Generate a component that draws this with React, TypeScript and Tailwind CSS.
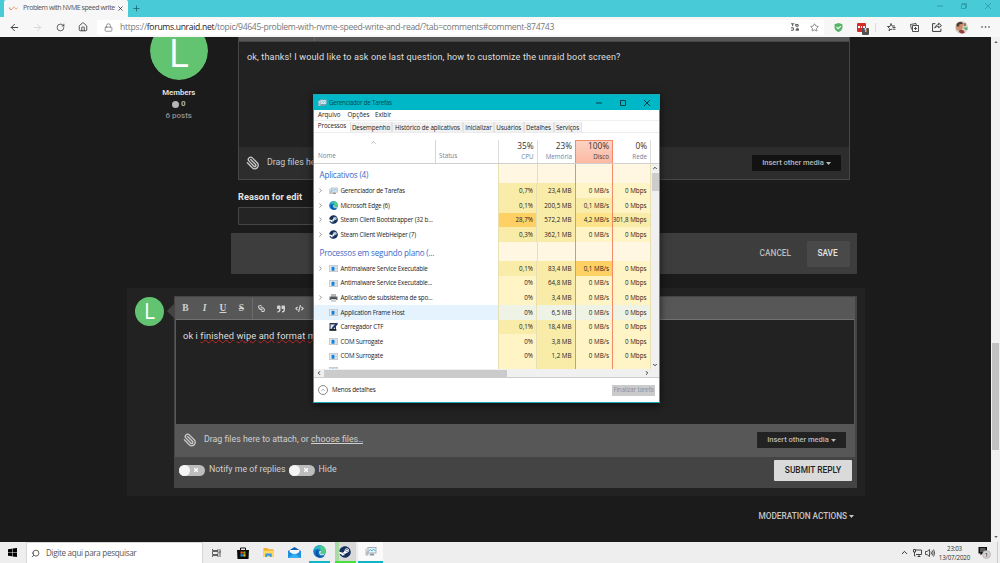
import type { ReactNode } from "react";
import {
  ArrowLeft,
  ArrowRight,
  Home,
  Lock,
  Paperclip,
  Plus,
  RotateCw,
  Search,
  Star,
  X,
  ChevronUp,
  ChevronDown,
  ChevronLeft,
  ChevronRight,
} from "lucide-react";
import { FaLink, FaQuoteRight, FaCode, FaSteam } from "react-icons/fa";

/* ---------- shared glyphs ---------- */

function Caret({ className = "" }: { className?: string }) {
  return (
    <svg viewBox="0 0 10 6" className={className || "h-[3px] w-[5px]"}>
      <path d="M0 0h10L5 6z" fill="currentColor" />
    </svg>
  );
}

function EdgeLogo({ className }: { className: string }) {
  return (
    <svg viewBox="0 0 24 24" className={className}>
      <circle cx="12" cy="12" r="11.5" fill="#1478c8" />
      <path d="M1 10C2 4 6.500.5 12 .5c7 0 11.500 5 11.500 10.500 0 4-3 6-6 6-2.500 0-4-.8-4-2 0-1 1.200-1.300 1.200-3.200C14.700 9.500 12.500 7.500 9 7.500c-4 0-7 1.500-8 2.500z" fill="#2fb6c0" />
      <path d="M14 .7c5.500.8 9.500 5 9.500 10.300 0 4-3 6-6 6-2.500 0-4-.8-4-2 0-1 1.200-1.300 1.200-3.200 0-3-2-6-.7-11.100z" fill="#5bd46e" opacity=".75" />
      <path d="M8.500 13c-.5 5 3.500 8.500 8 8.500 2.500 0 4.500-1 5.500-2-2 3-5.500 4.300-9 4C8 23 5 19.500 5 15.500 5 12 6.500 9.500 9 8.500c-.3 1.500-.4 2.500-.5 4.500z" fill="#0d4f9e" />
      <path d="M13.500 15c0 1.200 1.500 2 4 2 1.800 0 3.300-.6 4.500-1.700-.7 2.200-2.700 3.500-5.500 3.500-4 0-6-3-4.500-7.300.6-1.500 2.700-.5 2.700.5 0 1.700-1.200 2-1.200 3z" fill="#f3f3f3" />
    </svg>
  );
}

function SteamLogo({ className }: { className: string }) {
  return (
    <span className={`flex rounded-full bg-white ${className}`}>
      <FaSteam className="size-full text-[#15305c]" />
    </span>
  );
}

function MonitorIcon({ className }: { className: string }) {
  return (
    <svg viewBox="0 0 24 20" className={className}>
      <path d="M1 4h6v14H1z" fill="#b9bec2" />
      <path d="M5 1h18v13H5z" fill="#a9b0b5" />
      <path d="M7 3h14v9H7z" fill="#e2f3fa" />
      <path d="m7 10 4-4 3 3 3-4 4 4" stroke="#49a5cf" strokeWidth="1.800" fill="none" />
      <path d="M11 14h6l2 4H9z" fill="#8f979c" />
      <path d="M2 6h4M2 9h3" stroke="#fff" strokeWidth="1.200" />
    </svg>
  );
}

function AppIcon() {
  return (
    <svg viewBox="0 0 18 14" className="h-[7px] w-[9px]">
      <path d="M.5.5h17v13H.500z" fill="#e9edf0" stroke="#8c959b" />
      <path d="M5 3.500h6v8H5z" fill="#1680d8" />
      <path d="M12.500 4h3M12.500 7h3M12.500 10h3" stroke="#9fb0bb" />
    </svg>
  );
}

function PrinterIcon() {
  return (
    <svg viewBox="0 0 18 16" className="h-[8px] w-[9px]">
      <path d="M4 0h10v6H4z" fill="#b5b9bd" />
      <path d="M1 5h16v7H1z" fill="#6c7176" />
      <path d="M3 7h12v3H3z" fill="#474b50" />
      <path d="M4 10h10v6H4z" fill="#cfd3d6" />
    </svg>
  );
}

function CtfIcon() {
  return (
    <svg viewBox="0 0 18 18" className="h-[9px] w-[9px]">
      <path d="M1 2h13v15H1z" fill="#303a45" />
      <path d="M3 5h9v9H3z" fill="#dfe7ee" />
      <path d="M16 1 7 10l-3 6 6-3L18 4z" fill="#1f3472" />
      <path d="M1 16h14" stroke="#111" strokeWidth="2.500" />
    </svg>
  );
}

/* ---------- browser chrome ---------- */

function TabStrip() {
  return (
    <div className="flex h-[17px] shrink-0 items-stretch bg-[#48cbd6]">
      <div className="ml-[4px] flex w-[124px] items-center rounded-t-[2px] bg-[#f7f7f7] pl-[5px]">
        <svg viewBox="0 0 18 8" className="h-[5px] w-[9px]" fill="none" strokeWidth="1.600">
          <path d="M1 2v1c0 4 5 4 6 1" stroke="#d9604f" />
          <path d="M7 4c1-4 4-4 5-1s5 2 5-1" stroke="#ee9a55" />
        </svg>
        <span className="ml-[5px] w-[91px] whitespace-nowrap text-[7px] tracking-[-0.065em] text-[#555]">
          Problem with NVME speed write
        </span>
        <X className="ml-[2.500px] size-[7px] text-[#222]" strokeWidth={2.500} />
      </div>
      <Plus className="mt-[4px] ml-[4px] size-[9px] text-[#195f66]" strokeWidth={2} />
      <div className="ml-auto flex items-start gap-[18px] pt-[3px] pr-[9px] text-[#2a919b]">
        <svg viewBox="0 0 6 6" className="size-[6px]"><path d="M0 3h6" stroke="currentColor" strokeWidth=".8" /></svg>
        <svg viewBox="0 0 6 6" className="size-[6px]" fill="none" stroke="currentColor" strokeWidth=".7"><path d="M.5 1.500h4v4h-4zM1.500 1.500v-1h4v4h-1" /></svg>
        <svg viewBox="0 0 6 6" className="size-[6px]"><path d="m0 0 6 6M6 0 0 6" stroke="currentColor" strokeWidth=".7" /></svg>
      </div>
    </div>
  );
}

function Toolbar() {
  return (
    <div className="flex h-[20px] shrink-0 items-center bg-[#f7f7f7] pl-[9px] text-[#333]">
      <ArrowLeft className="size-[11px]" strokeWidth={2} />
      <ArrowRight className="ml-[12px] size-[11px] text-[#d5d5d5]" strokeWidth={2} />
      <RotateCw className="ml-[13px] size-[9px]" strokeWidth={2} />
      <Home className="ml-[13px] size-[10px]" strokeWidth={2} />
      <div className="ml-[9px] flex h-[15px] w-[727px] items-center rounded-[2px] bg-white pl-[7px]">
        <Lock className="size-[9px] text-[#666]" strokeWidth={1.800} />
        <span className="ml-[7px] text-[8.600px] tracking-[-0.037em] whitespace-nowrap text-[#777]">
          https://<span className="text-[#222]">forums.unraid.net</span>/topic/94645-problem-with-nvme-speed-write-and-read/?tab=comments#comment-874743
        </span>
        <svg viewBox="0 0 10 10" className="ml-auto size-[8px]" fill="none" stroke="#555" strokeWidth="1.200">
          <path d="M0 1h4M2 1v3M6 1v3h3V2H6M0 6h3v3H0M6 9l2-3 2 3zM7 8h2" />
        </svg>
        <Star className="mr-[5px] ml-[11px] size-[9px] text-[#666]" strokeWidth={2} />
      </div>
      <svg viewBox="0 0 16 16" className="ml-[10px] size-[9px]">
        <path d="M8 0 15 2v6c0 4-4 7-7 8-3-1-7-4-7-8V2z" fill="#56b567" />
        <path d="m4.500 7 3 3 4.500-4.500" stroke="#fff" strokeWidth="2" fill="none" />
      </svg>
      <div className="relative ml-[14px] flex h-[9px] w-[9px] items-center justify-center gap-px rounded-[1px] bg-[#d52b2b]">
        <i className="size-[1.500px] bg-white" /><i className="size-[1.500px] bg-white" /><i className="size-[1.500px] bg-white" />
        <b className="absolute top-[5px] left-[5px] flex h-[7px] w-[7px] items-center justify-center rounded-[1px] bg-[#505050] text-[5px] text-white">1</b>
      </div>
      <i className="ml-[9px] h-[9px] w-px bg-[#ddd]" />
      <svg viewBox="0 0 18 18" className="ml-[11px] size-[9px]" fill="none" stroke="currentColor" strokeWidth="1.700">
        <path d="m8 1 2 5h6M10 13l-2-1-4 4 1-5-4-4h5l2-6M11 9h6M11 12.500h6" />
      </svg>
      <svg viewBox="0 0 18 18" className="ml-[14px] size-[9px]" fill="none" stroke="currentColor" strokeWidth="1.700">
        <path d="M5 5h12v12H5zM3 13 1 3l11-2 .5 3M11 8v6M8 11h6" />
      </svg>
      <svg viewBox="0 0 18 18" className="ml-[13px] size-[10px]" fill="none" stroke="currentColor" strokeWidth="1.700">
        <path d="M6 3H1v14h15v-5M5 11c1-5 4-6 7-6V2l5 4.500-5 4V8c-3 0-5 .5-7 3z" />
      </svg>
      <svg viewBox="0 0 24 24" className="ml-[13px] size-[13px]">
        <circle cx="12" cy="12" r="12" fill="#d9cdbd" />
        <path d="M3 5c4-5 10-5 12 0l-1 9-6 5-6-4z" fill="#c98e6e" />
        <path d="M3 6c3-5 10-6 12-1l-6 1-6 4zM4 8h4v2H4z" fill="#453a35" />
        <path d="M7 19c3-4 8-4 11 2-3 3-8 3-11-2z" fill="#933f3c" />
        <path d="M16 12h7v4h-4z" fill="#46b06a" />
        <path d="M16 4h4v5h-4z" fill="#8a6a57" />
      </svg>
      <svg viewBox="0 0 18 4" className="ml-[13px] h-[2px] w-[9px]" fill="currentColor">
        <circle cx="2" cy="2" r="1.600" /><circle cx="9" cy="2" r="1.600" /><circle cx="16" cy="2" r="1.600" />
      </svg>
    </div>
  );
}

/* ---------- forum page ---------- */

function MediaButton({ className }: { className: string }) {
  return (
    <button className={`flex h-[16px] w-[89px] items-center justify-center gap-[2px] rounded-[1px] text-[7.600px] font-medium tracking-[-0.005em] text-[#b9b9b9] ${className}`}>
      Insert other media
      <Caret />
    </button>
  );
}

function EditedPost() {
  return (
    <section className="flex h-[196px] shrink-0">
      <div className="ml-[126.500px] flex w-[104.500px] flex-col items-center">
        <div className="flex h-[43px] w-[58px] items-end justify-center overflow-hidden rounded-b-full">
          <div className="flex size-[58px] shrink-0 items-center justify-center rounded-full bg-[#62c370] font-['Open_Sans'] text-[39px] leading-none text-white">
            L
          </div>
        </div>
        <div className="mt-[6.500px] flex h-[12px] items-center text-[7.800px] font-bold text-[#ddd]">Members</div>
        <div className="flex h-[11px] items-center gap-[2px] text-[8px] font-bold text-[#b0b0b0]">
          <i className="size-[7px] rounded-full bg-[#b5b5b5]" />0
        </div>
        <div className="flex h-[12px] items-center text-[8px] font-medium text-[#8f8f8f]">6 posts</div>
      </div>
      <div className="ml-[7px] w-[612px]">
        <div className="h-[143px] border border-t-0 border-[#474747] bg-[#222]">
          <div className="flex h-[5px] border-b border-[#444] bg-[#575757]">
            <i className="ml-[75px] w-px bg-[#6b6b6b]" />
          </div>
          <div className="h-[105px] pt-[9px] pl-[8px] text-[9.100px] leading-[13px] tracking-[0.014em] text-[#dedede]">
            ok, thanks! I would like to ask one last question, how to customize the unraid boot screen?
          </div>
          <div className="flex h-[32px] items-center bg-[#2d2d2d] pr-[8px] pl-[7px]">
            <Clip />
            <span className="ml-[7px] text-[8.800px] text-[#c9c9c9]">Drag files here to attach, or choose files...</span>
            <MediaButton className="ml-auto bg-[#121212]" />
          </div>
        </div>
        <div className="mt-[10px] flex h-[14px] items-center text-[9.200px] font-bold tracking-[0.010em] text-[#e3e3e3]">Reason for edit</div>
        <div className="mt-[3px] h-[18px] w-[220px] rounded-[1px] border border-[#464646] bg-[#242424]" />
      </div>
    </section>
  );
}

function Clip() {
  return <Paperclip className="size-[14px] -scale-x-100 text-[#c8c8c8]" strokeWidth={2.300} />;
}

function Toggle() {
  return (
    <span className="flex h-[11px] w-[26px] items-center rounded-full bg-[#bdbdbd]">
      <i className="size-[11px] rounded-full bg-[#f4f4f4]" />
      <X className="ml-[3px] size-[6px] text-white" strokeWidth={5} />
    </span>
  );
}

function Misspelt({ children }: { children: ReactNode }) {
  return <span className="underline decoration-[#c22626] decoration-wavy decoration-[0.500px] underline-offset-0 [text-decoration-skip-ink:none]">{children}</span>;
}

function ReplyCard() {
  return (
    <section className="mt-[14px] ml-[127px] flex h-[208px] w-[738px] shrink-0 bg-[#222] pt-[8px]">
      <div className="mt-[1px] ml-[8px] flex size-[29px] items-center justify-center rounded-full bg-[#62c370] font-['Open_Sans'] text-[21px] leading-none text-white">
        L
      </div>
      <svg viewBox="0 0 7 14" className="mt-[8px] ml-[3px] h-[14px] w-[7px]"><path d="M7 0v14L0 7z" fill="#444" /></svg>
      <div className="h-[192px] w-[683px] bg-[#444] pt-[1px] pl-[1px]">
        <div className="w-[680px] border border-[#575757] bg-[#222]">
          <div className="flex h-[22px] items-center border-b border-[#717171] bg-[#575757] font-['Liberation_Serif',serif] text-[9.500px] leading-none text-[#d2d2d2]">
            <b className="ml-[4px] w-[11px] text-center">B</b>
            <b className="ml-[8px] w-[11px] text-center italic">I</b>
            <b className="ml-[7.500px] w-[11px] text-center underline">U</b>
            <b className="ml-[7.500px] w-[11px] text-center line-through">S</b>
            <i className="ml-[5px] h-full w-px bg-[#6c6c6c]" />
            <FaLink className="ml-[5px] size-[7px] rotate-90" />
            <FaQuoteRight className="ml-[12px] size-[8px]" />
            <FaCode className="ml-[10px] size-[9px]" />
          </div>
          <div className="h-[104px] pt-[9px] pl-[7px] text-[9.300px] leading-[13px] tracking-[0.010em] text-[#dedede]">
            ok i <Misspelt>finished</Misspelt> <Misspelt>wipe</Misspelt> <Misspelt>and</Misspelt> <Misspelt>format</Misspelt> <Misspelt>my</Misspelt>
          </div>
          <div className="flex h-[32px] items-center bg-[#575757] pr-[8px] pl-[7px]">
            <Clip />
            <span className="ml-[7px] text-[8.800px] text-[#d0d0d0]">
              Drag files here to attach, or <u>choose files<span className="tracking-[-0.080em]">...</span></u>
            </span>
            <MediaButton className="ml-auto bg-[#222]" />
          </div>
        </div>
        <div className="flex h-[26px] items-center pl-[4px] text-[8.800px] text-[#cfcfcf]">
          <Toggle />
          <span className="ml-[4px] w-[79.500px]">Notify me of replies</span>
          <Toggle />
          <span className="ml-[4px]">Hide</span>
          <button className="mr-[5px] ml-auto h-[21px] w-[78px] rounded-[1px] bg-[#dadada] text-[8.400px] font-medium text-[#222]">SUBMIT REPLY</button>
        </div>
      </div>
    </section>
  );
}

function Forum() {
  return (
    <div className="flex min-h-0 flex-1 bg-[#1b1b1b] font-[Roboto,sans-serif]">
      <main className="flex w-[991px] flex-col overflow-hidden">
        <EditedPost />
        <div className="ml-[231px] flex h-[41px] w-[626px] shrink-0 items-center justify-end bg-[#3d3d3d] pr-[7px] text-[8.300px] font-medium">
          <span className="mr-[16px] text-[#bbb]">CANCEL</span>
          <button className="h-[26px] w-[43px] rounded-[1px] bg-[#494949] pr-[2px] text-[#e4e4e4]">SAVE</button>
        </div>
        <ReplyCard />
        <div className="mt-[14px] flex h-[12px] w-[854px] items-center justify-end gap-[2px] text-[8.300px] font-medium tracking-[-0.005em] text-[#c5c5c5]">
          MODERATION ACTIONS
          <Caret />
        </div>
      </main>
      <aside className="flex w-[9px] flex-col items-center bg-[#f0f0f0] text-[#555]">
        <Caret className="mt-[4px] h-[2px] w-[4px] rotate-180" />
        <i className="mt-[300px] h-[107px] w-[7px] bg-[#c1c1c1]" />
        <Caret className="mt-auto mb-[4px] h-[2px] w-[4px]" />
      </aside>
    </div>
  );
}

/* ---------- task manager ---------- */

type Process = {
  name: string;
  icon: ReactNode;
  expandable?: boolean;
  hover?: boolean;
  cells: [string, string, string, string];
  tones: [string, string, string, string];
};

const Z = "bg-[#fff4c6]";
const M = "bg-[#f9eca9]";
const H = "bg-[#fee388]";
const O = "bg-[#ffd165]";
const V = "bg-[#eef3e6]";

const apps: Process[] = [
  { name: "Gerenciador de Tarefas", icon: <MonitorIcon className="h-[8px] w-[9px]" />, expandable: true, cells: ["0,7%", "23,4 MB", "0 MB/s", "0 Mbps"], tones: [M, M, Z, Z] },
  { name: "Microsoft Edge (6)", icon: <EdgeLogo className="size-[9px]" />, expandable: true, cells: ["0,1%", "200,5 MB", "0,1 MB/s", "0 Mbps"], tones: [M, M, M, Z] },
  { name: "Steam Client Bootstrapper (32 b...", icon: <SteamLogo className="size-[9px]" />, expandable: true, cells: ["28,7%", "572,2 MB", "4,2 MB/s", "301,8 Mbps"], tones: [O, M, H, M] },
  { name: "Steam Client WebHelper (7)", icon: <SteamLogo className="size-[9px]" />, expandable: true, cells: ["0,3%", "362,1 MB", "0 MB/s", "0 Mbps"], tones: [M, M, Z, Z] },
];

const background: Process[] = [
  { name: "Antimalware Service Executable", icon: <AppIcon />, expandable: true, cells: ["0,1%", "83,4 MB", "0,1 MB/s", "0 Mbps"], tones: [M, M, O, Z] },
  { name: "Antimalware Service Executable...", icon: <AppIcon />, cells: ["0%", "64,8 MB", "0 MB/s", "0 Mbps"], tones: [Z, M, Z, Z] },
  { name: "Aplicativo de subsistema de spo...", icon: <PrinterIcon />, expandable: true, cells: ["0%", "3,4 MB", "0 MB/s", "0 Mbps"], tones: [Z, M, Z, Z] },
  { name: "Application Frame Host", icon: <AppIcon />, hover: true, cells: ["0%", "6,5 MB", "0 MB/s", "0 Mbps"], tones: [V, V, V, V] },
  { name: "Carregador CTF", icon: <CtfIcon />, cells: ["0,1%", "18,4 MB", "0 MB/s", "0 Mbps"], tones: [M, M, Z, Z] },
  { name: "COM Surrogate", icon: <AppIcon />, cells: ["0%", "3,8 MB", "0 MB/s", "0 Mbps"], tones: [Z, M, Z, Z] },
  { name: "COM Surrogate", icon: <AppIcon />, cells: ["0%", "1,2 MB", "0 MB/s", "0 Mbps"], tones: [Z, M, Z, Z] },
];

const columnEdges = [
  "w-[38.500px] border-l border-[#e9dfb4]",
  "w-[38.500px] border-l border-[#e9dfb4]",
  "w-[38px] border-x border-[#f58a68]",
  "w-[38px] border-r border-[#e9dfb4]",
];

function Cells({ values, tones }: { values: string[]; tones: string[] }) {
  return (
    <>
      {values.map((v, i) => (
        <div key={i} className={`flex items-center justify-end whitespace-nowrap ${i === 2 ? "pr-[2.500px]" : "pr-[3px]"} ${columnEdges[i]} ${tones[i]}`}>
          {v}
        </div>
      ))}
    </>
  );
}

const blank = ["", "", "", ""];
const pale = ["bg-[#fff7e1]", "bg-[#fff7e1]", "bg-[#fff7e1]", "bg-[#fff7e1]"];

function Group({ title, className }: { title: string; className: string }) {
  return (
    <div className={`flex shrink-0 ${className}`}>
      <div className="flex w-[183.500px] items-center pt-[3px] pl-[5px] text-[8.100px] tracking-[-0.025em] text-[#3b68c9]">{title}</div>
      <Cells values={blank} tones={pale} />
    </div>
  );
}

function Row({ p }: { p: Process }) {
  return (
    <div className="flex h-[14.600px] shrink-0 text-[6.250px] text-[#222]">
      <div className={`flex w-[183.500px] items-center pl-[3px] ${p.hover ? "bg-[#e5f3ff]" : ""}`}>
        <span className="w-[11.500px]">{p.expandable && <ChevronRight className="size-[7px] text-[#666]" strokeWidth={2.200} />}</span>
        <span className="flex w-[12px] items-center">{p.icon}</span>
        <span className="tracking-[-0.028em]">{p.name}</span>
      </div>
      <Cells values={p.cells} tones={p.tones} />
    </div>
  );
}

const tabs: [string, string][] = [
  ["Desempenho", "w-[42px]"],
  ["Histórico de aplicativos", "w-[71px]"],
  ["Inicializar", "w-[31px]"],
  ["Usuários", "w-[29.500px]"],
  ["Detalhes", "w-[30px]"],
  ["Serviços", "w-[28px]"],
];

const meters: [string, string, string][] = [
  ["35%", "CPU", "w-[38.500px] border-l border-[#ddd]"],
  ["23%", "Memória", "w-[38.500px] border-l border-[#ddd]"],
  ["100%", "Disco", "w-[38px] border border-b-0 border-[#f58a68] bg-[linear-gradient(#fbd3c4,#fdb8a3)]"],
  ["0%", "Rede", "w-[38px] border-r border-[#ddd]"],
];

function TaskManager() {
  return (
    <div className="absolute top-[94px] left-[313px] flex h-[309px] w-[347px] flex-col border border-[#1aa9b3] bg-white font-['Open_Sans',sans-serif] text-[6.250px] text-[#222] shadow-[0_2px_8px_rgba(0,0,0,.6)]">
      <div className="flex h-[15px] shrink-0 items-center bg-[#00b7c7] pl-[4px]">
        <MonitorIcon className="h-[8px] w-[9px]" />
        <span className="ml-[2px] tracking-[-0.040em] text-[#064b52]">Gerenciador de Tarefas</span>
        <div className="ml-auto flex gap-[18px] pr-[9px] text-[#063e44]">
          <svg viewBox="0 0 6 6" className="size-[6px]"><path d="M0 3h6" stroke="currentColor" /></svg>
          <svg viewBox="0 0 6 6" className="size-[6px]"><path d="M.5.5h5v5h-5z" stroke="currentColor" fill="none" /></svg>
          <svg viewBox="0 0 6 6" className="size-[6px]"><path d="m0 0 6 6M6 0 0 6" stroke="currentColor" /></svg>
        </div>
      </div>
      <div className="flex h-[11px] shrink-0 items-center border-b border-[#f0f0f0] pl-[4px]">
        <span className="w-[29.500px]">Arquivo</span>
        <span className="w-[27.500px]">Opções</span>
        <span>Exibir</span>
      </div>
      <div className="flex h-[12px] shrink-0 items-end border-b border-[#ececec] tracking-[-0.015em]">
        <div className="flex h-full w-[36px] items-center justify-center bg-white pb-[1px]">Processos</div>
        {tabs.map(([label, width]) => (
          <div key={label} className={`flex h-[10px] items-center justify-center border-x border-[#e3e3e3] bg-[#f1f1f1] pt-px whitespace-nowrap ${width}`}>
            {label}
          </div>
        ))}
      </div>
      <div className="flex h-[31px] shrink-0 border-b border-[#cfcfcf] pt-[7px] text-[#6f7f9c]">
        <div className="flex w-[122px] flex-col border-r border-[#d5d5d5] pl-[4px]">
          <ChevronUp className="mt-[-1px] ml-[52px] size-[7px] text-[#777]" strokeWidth={1.800} />
          <span className="mt-[5px] leading-[10px]">Nome</span>
        </div>
        <div className="w-[62px] pt-[11px] pl-[3px] leading-[10px]">Status</div>
        {meters.map(([value, label, box]) => (
          <div key={label} className={`flex flex-col items-end justify-start pr-[3px] ${box}`}>
            <span className={`text-[8.300px] text-[#333] ${label === "Disco" ? "mt-[-1px] leading-[12px]" : "leading-[12px]"}`}>{value}</span>
            <span className={label === "Disco" ? "leading-[10px] text-[#444]" : "leading-[10px]"}>{label}</span>
          </div>
        ))}
      </div>
      <div className="flex h-[205px] shrink-0">
        <div className="flex w-[337px] flex-col overflow-hidden">
          <Group title="Aplicativos (4)" className="h-[19.400px] pl-[0.500px]" />
          {apps.map((p) => <Row key={p.name} p={p} />)}
          <Group title="Processos em segundo plano (..." className="h-[19.400px] pl-[0.500px]" />
          {background.map((p, i) => <Row key={i} p={p} />)}
          <Row p={{ name: "", icon: <AppIcon />, cells: ["", "", "", ""], tones: [Z, M, Z, Z] }} />
        </div>
        <div className="flex flex-1 flex-col items-center bg-[#f0f0f0]">
          <ChevronUp className="mt-[1px] size-[6px]" strokeWidth={3.500} />
          <i className="mt-[2px] h-[18px] w-[7px] bg-[#cdcdcd]" />
          <ChevronDown className="mt-auto mb-[1px] size-[6px]" strokeWidth={3.500} />
        </div>
      </div>
      <div className="flex h-[9px] shrink-0 items-center border-b border-[#ccc] bg-[#f0f0f0] pr-[9px]">
        <ChevronLeft className="ml-[2px] size-[6px]" strokeWidth={3.500} />
        <i className="ml-[2px] h-[7px] w-[183px] bg-[#cbcbcb]" />
        <ChevronRight className="ml-auto size-[6px]" strokeWidth={3.500} />
      </div>
      <div className="flex flex-1 items-center pr-[4px] pl-[4px]">
        <span className="flex size-[10px] items-center justify-center rounded-full border-[0.500px] border-[#888]">
          <ChevronUp className="size-[6px] text-[#666]" strokeWidth={2} />
        </span>
        <span className="ml-[4px] tracking-[-0.030em]">Menos detalhes</span>
        <button className="ml-auto flex h-[11px] w-[43px] items-center justify-center bg-[#cbcbcb] tracking-[-0.030em] whitespace-nowrap text-[#8a8fa8]">Finalizar tarefa</button>
      </div>
    </div>
  );
}

/* ---------- taskbar ---------- */

function Taskbar() {
  return (
    <footer className="flex h-[21px] shrink-0 items-stretch bg-[#eee] text-[#222]">
      <div className="flex w-[26px] items-center pl-[8px]">
        <svg viewBox="0 0 18 18" className="size-[9px]"><path d="M0 2.500 8 1.300v7.200H0zM9 1.200 18 0v8.500H9zM0 9.500h8v7.200l-8-1.200zM9 9.500h9V18l-9-1.200z" fill="#000" /></svg>
      </div>
      <div className="flex w-[177px] items-center border-x border-t border-[#d8d8d8] bg-white pl-[4px]">
        <Search className="size-[9px] -scale-x-100 text-[#333]" strokeWidth={2} />
        <span className="ml-[6px] text-[8.100px] tracking-[-0.040em] text-[#555]">Digite aqui para pesquisar</span>
      </div>
      <div className="flex w-[27px] items-center justify-center">
        <svg viewBox="0 0 18 16" className="h-[8px] w-[9px]" fill="none" stroke="#333" strokeWidth="1.500"><path d="M1 0v3h11V0M1 5h11v6H1zM1 16v-3h11v3M16 0v16M14 6h4" /></svg>
      </div>
      <div className="flex w-[26px] items-center justify-center">
        <svg viewBox="0 0 24 24" className="size-[12px]">
          <path d="M7 6V2h10v4" stroke="#111" strokeWidth="2" fill="none" />
          <path d="M0 6h24l-1 18H1z" fill="#0c0c0c" />
          <path d="M7 9h4.500v4.500H7z" fill="#f25022" /><path d="M12.500 9H17v4.500h-4.500z" fill="#7fba00" />
          <path d="M7 14.500h4.500V19H7z" fill="#00a4ef" /><path d="M12.500 14.500H17V19h-4.500z" fill="#ffb900" />
        </svg>
      </div>
      <div className="flex w-[25px] items-center justify-center">
        <svg viewBox="0 0 24 22" className="h-[11px] w-[11px]">
          <path d="M1 1h9l2 3h11v17H1z" fill="#efb02e" />
          <path d="M1 7h22v14H1z" fill="#ffd767" />
          <path d="M5 13h14v8h-4v-3H9v3H5z" fill="#3c9ae0" />
        </svg>
      </div>
      <div className="flex w-[26px] items-center justify-center">
        <svg viewBox="0 0 26 22" className="h-[11px] w-[13px]">
          <path d="M0 8 13 0l13 8v14H0z" fill="#0f62b0" />
          <path d="M3 6h20v8H3z" fill="#f4f7fa" />
          <path d="M0 8l13 8 13-8v14H0z" fill="#1e8fe0" />
          <path d="M0 22 13 13l13 9z" fill="#36b0f2" />
        </svg>
      </div>
      <div className="ml-[2px] flex w-[21px] flex-col items-center">
        <span className="flex flex-1 items-center"><EdgeLogo className="size-[13px]" /></span>
        <i className="h-[2px] w-full bg-[#12b5c4]" />
      </div>
      <div className="ml-[5px] flex w-[21px] flex-col items-center bg-[linear-gradient(90deg,#a8dca4_4px,#d9d9d9_4px)]">
        <span className="flex flex-1 items-center"><SteamLogo className="mr-[1px] size-[12px]" /></span>
        <i className="h-[2px] w-full bg-[#45e03a]" />
      </div>
      <div className="ml-[2px] flex w-[25px] flex-col items-center bg-[#fafafa]">
        <span className="flex flex-1 items-center"><MonitorIcon className="h-[11px] w-[12px]" /></span>
        <i className="h-[2px] w-full bg-[#12b5c4]" />
      </div>
      <div className="ml-auto flex items-center">
        <ChevronUp className="size-[9px]" strokeWidth={2.500} />
        <svg viewBox="0 0 18 16" className="ml-[4px] h-[8px] w-[9px]" fill="none" stroke="#222" strokeWidth="1.600"><path d="M5 2h12v9H6M1 1h4v5H1zM3 6v8h2M9 15h6M12 11v4" /></svg>
        <svg viewBox="0 0 20 16" className="ml-[3px] h-[8px] w-[10px]" fill="none" stroke="#222" strokeWidth="1.500"><path d="M1 5h3l5-4v14l-5-4H1zM12 5q2 3 0 6M14.500 3q3.500 5 0 10M17 1q5 7 0 14" /></svg>
        <div className="ml-[4px] flex w-[31px] flex-col items-center text-[6.250px] leading-[9px] tracking-[-0.030em] text-[#333]">
          <span>23:03</span>
          <span>13/07/2020</span>
        </div>
        <svg viewBox="0 0 26 26" className="ml-[8px] size-[13px]">
          <path d="M1 2h17v13H9l-4 4v-4H1z" fill="#111" />
          <path d="M4 6h11M4 10h11" stroke="#eee" strokeWidth="1.300" />
          <circle cx="17" cy="17" r="8" fill="#d3d3d3" stroke="#999" />
          <text x="17" y="21" textAnchor="middle" fontSize="12" fill="#111">1</text>
        </svg>
        <i className="ml-[6px] h-[21px] w-px bg-[#ccc]" />
        <i className="w-[2px]" />
      </div>
    </footer>
  );
}

export default function App() {
  return (
    <div className="relative flex h-[563px] w-[1000px] flex-col overflow-hidden font-['Open_Sans',sans-serif]">
      <TabStrip />
      <Toolbar />
      <Forum />
      <Taskbar />
      <TaskManager />
    </div>
  );
}
